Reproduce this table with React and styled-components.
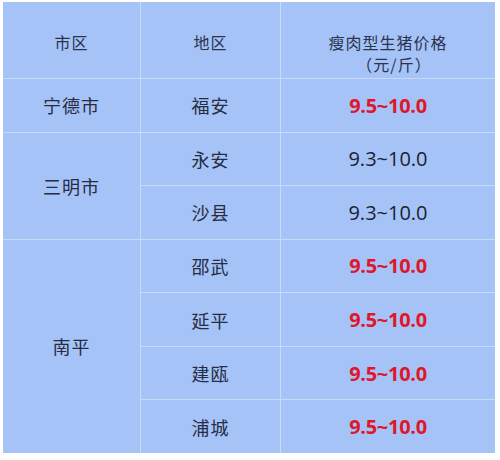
import React from 'react'
import styled, { createGlobalStyle } from 'styled-components'

const Global = createGlobalStyle`
  html, body {
    margin: 0;
    padding: 0;
    background: #ffffff;
  }
`

const Page = styled.div`
  width: 500px;
  height: 460px;
  padding: 2px 0 0 3px;
  box-sizing: border-box;
  background: #ffffff;
`

const Grid = styled.div`
  display: grid;
  width: 492px;
  height: 451px;
  grid-template-columns: 137px 139px 214px;
  grid-template-rows: 76px repeat(7, 1fr);
  gap: 1px;
  background: #c8daf8;
`

const Cell = styled.div`
  background: #a5c3f6;
  display: flex;
  flex-direction: column;
  align-items: center;
  justify-content: center;
  grid-row: ${p => p.$row || 'auto'};
  grid-column: ${p => p.$col || 'auto'};
  font-family: "Noto Sans CJK SC", "Noto Sans", sans-serif;
  color: #27304a;
`

const HeadCell = styled(Cell)`
  justify-content: flex-start;
  padding-top: 29px;
`

const HeadText = styled.span`
  font-size: 16px;
  line-height: 22px;
  letter-spacing: 1px;
  color: #2a3350;
  padding-left: ${p => p.$shift || 0};
`

const CityText = styled.span`
  font-size: 18px;
  letter-spacing: 1px;
  color: #252c44;
`

const Price = styled.span`
  font-family: "Open Sans", "Liberation Sans", sans-serif;
  font-size: 20px;
  font-weight: ${p => (p.$hot ? 700 : 400)};
  color: ${p => (p.$hot ? '#e0162b' : '#1c1f33')};
  letter-spacing: ${p => (p.$hot ? '-0.3px' : '0')};
`

const rows = [
  { area: '福安', price: '9.5~10.0', hot: true },
  { area: '永安', price: '9.3~10.0', hot: false },
  { area: '沙县', price: '9.3~10.0', hot: false },
  { area: '邵武', price: '9.5~10.0', hot: true },
  { area: '延平', price: '9.5~10.0', hot: true },
  { area: '建瓯', price: '9.5~10.0', hot: true },
  { area: '浦城', price: '9.5~10.0', hot: true },
]

export default function App() {
  return (
    <Page>
      <Global />
      <Grid>
        <HeadCell><HeadText>市区</HeadText></HeadCell>
        <HeadCell><HeadText>地区</HeadText></HeadCell>
        <HeadCell>
          <HeadText>瘦肉型生猪价格</HeadText>
          <HeadText $shift="12px">（元/斤）</HeadText>
        </HeadCell>

        <Cell $col="1" $row="2"><CityText>宁德市</CityText></Cell>
        <Cell $col="1" $row="3 / span 2"><CityText>三明市</CityText></Cell>
        <Cell $col="1" $row="5 / span 4"><CityText>南平</CityText></Cell>

        {rows.map((r, i) => (
          <React.Fragment key={r.area}>
            <Cell $col="2" $row={`${i + 2}`}><CityText>{r.area}</CityText></Cell>
            <Cell $col="3" $row={`${i + 2}`}><Price $hot={r.hot}>{r.price}</Price></Cell>
          </React.Fragment>
        ))}
      </Grid>
    </Page>
  )
}
